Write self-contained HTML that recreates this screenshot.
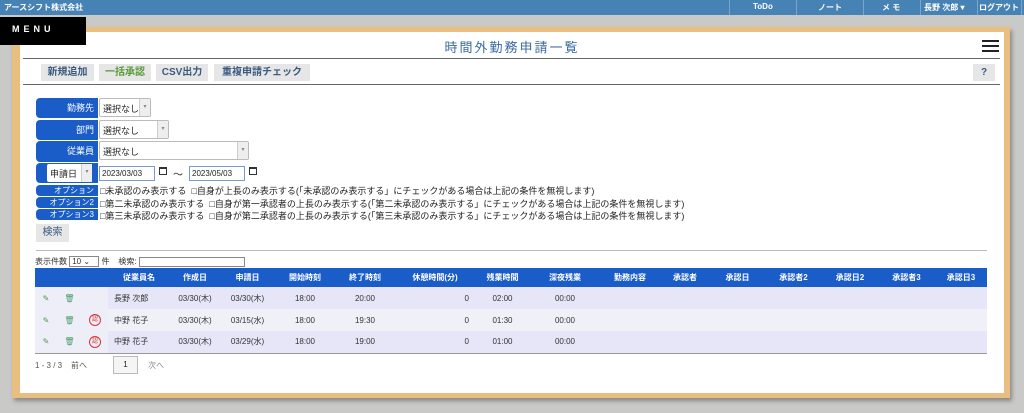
<!DOCTYPE html>
<html><head><meta charset="utf-8"><style>
*{box-sizing:border-box;margin:0;padding:0}
body{width:1024px;height:413px;overflow:hidden;background:#c9c9c7;font-family:"Liberation Sans","Noto Sans CJK JP",sans-serif;position:relative;font-size:9px;color:#222}
.abs{position:absolute}
.top{left:0;top:0;width:1024px;height:15px;background:#4682b4;color:#fff;font-size:8px;font-weight:bold}
.top span{position:absolute;top:2px}
.top .sep{position:absolute;top:0;width:1px;height:15px;background:#7aa6cc}
.card{left:12px;top:27px;width:998px;height:371px;background:#e8bf80;box-shadow:2px 3px 4px #888}
.inner{left:20px;top:32px;width:984px;height:361px;background:#fff}
.menu{left:0;top:17px;width:86px;height:28px;background:#000;color:#fff;font-weight:bold;font-size:9px;letter-spacing:4px;padding:7px 0 0 12px}
.title{left:0;width:1024px;top:37px;text-align:center;color:#3a6aa0;font-size:13px;letter-spacing:2px}
.hr{height:1px;background:#666}
.btn{top:64px;height:17px;background:#e6e6e6;font-weight:bold;font-size:10px;color:#3a5a80;text-align:center;line-height:17px}
.lab{left:36px;width:62px;background:#1a5cc8;color:#fff;text-align:right;padding-right:4px;border-radius:4px 0 0 4px;font-size:9px}
.sel{height:19px;border:1px solid #bbb;background:#fff;font-size:9px;padding:3px 0 0 3px;border-radius:2px}
.sel i{position:absolute;right:0;top:0;width:11px;height:17px;background:#eee;border-left:1px solid #ccc;font-style:normal;font-size:6px;color:#888;text-align:center;line-height:17px}
.inp{height:15px;border:1px solid #7a9cc8;background:#fff;font-size:8px;padding:2px 0 0 2px}
.cal{width:8px;height:8px;border:1px solid #333;border-top-width:2px}
.opt{font-size:9px;color:#222;white-space:nowrap}
table{position:absolute;left:35px;top:268px;width:952px;border-collapse:collapse;font-size:8px}
th{background:#1a5cc8;color:#fff;height:19px;font-weight:bold;font-size:8px}
td{height:22px;text-align:center;color:#333}
tr.a td{background:#e6e6f8}tr.b td{background:#f0f0f8}
tr.a td.ic,tr.b td.ic{background:#eeeef8}
tbody tr:last-child td{border-bottom:1px solid #999}
.stamp{display:inline-block;width:12px;height:12px;border:1px solid #d33;border-radius:50%;color:#d33;font-size:6px;line-height:10px}
</style></head><body>
<div class="abs top"><span style="left:4px">アースシフト株式会社</span>
<div class="sep" style="left:729px"></div><span style="left:753px">ToDo</span>
<div class="sep" style="left:796px"></div><span style="left:818px">ノート</span>
<div class="sep" style="left:863px"></div><span style="left:882px">メ モ</span>
<div class="sep" style="left:920px"></div><span style="left:924px">長野 次郎 ▾</span>
<div class="sep" style="left:977px"></div><span style="left:979px">ログアウト</span>
<div class="sep" style="left:1021px"></div></div>
<div class="abs card"></div>
<div class="abs inner"></div>
<div class="abs menu">MENU</div>
<div class="abs title">時間外勤務申請一覧</div>
<div class="abs" style="left:982px;top:40px;width:17px"><div style="height:2px;background:#222;margin-bottom:3px"></div><div style="height:2px;background:#222;margin-bottom:3px"></div><div style="height:2px;background:#222"></div></div>
<div class="abs hr" style="left:23px;top:58px;width:977px"></div>
<div class="abs btn" style="left:41px;width:53px">新規追加</div>
<div class="abs btn" style="left:99px;width:52px;color:#5a9a3a">一括承認</div>
<div class="abs btn" style="left:156px;width:52px">CSV出力</div>
<div class="abs btn" style="left:214px;width:96px">重複申請チェック</div>
<div class="abs btn" style="left:973px;width:22px">?</div>
<div class="abs hr" style="left:23px;top:84px;width:977px"></div>

<div class="abs lab" style="top:98px;height:20px;line-height:20px">勤務先</div>
<div class="abs sel" style="left:99px;top:98px;width:52px">選択なし<i>▾</i></div>
<div class="abs lab" style="top:120px;height:20px;line-height:20px">部門</div>
<div class="abs sel" style="left:99px;top:120px;width:70px">選択なし<i>▾</i></div>
<div class="abs lab" style="top:141px;height:21px;line-height:21px">従業員</div>
<div class="abs sel" style="left:99px;top:141px;width:150px">選択なし<i>▾</i></div>
<div class="abs lab" style="top:163px;height:20px"></div>
<div class="abs sel" style="left:47px;top:164px;width:45px;height:18px;border:none;padding-top:3px">申請日<i style="height:18px">▾</i></div>
<div class="abs inp" style="left:99px;top:166px;width:56px">2023/03/03</div>
<div class="abs cal" style="left:159px;top:167px"></div>
<div class="abs" style="left:173px;top:166px;font-size:10px">～</div>
<div class="abs inp" style="left:189px;top:166px;width:56px">2023/05/03</div>
<div class="abs cal" style="left:249px;top:167px"></div>
<div class="abs lab" style="top:185px;height:11px;line-height:11px;font-size:8px">オプション</div>
<div class="abs lab" style="top:197px;height:11px;line-height:11px;font-size:8px">オプション2</div>
<div class="abs lab" style="top:209px;height:11px;line-height:11px;font-size:8px">オプション3</div>
<div class="abs opt" style="left:100px;top:184px">□未承認のみ表示する &nbsp;□自身が上長のみ表示する(「未承認のみ表示する」にチェックがある場合は上記の条件を無視します)</div>
<div class="abs opt" style="left:100px;top:197px">□第二未承認のみ表示する &nbsp;□自身が第一承認者の上長のみ表示する(「第二未承認のみ表示する」にチェックがある場合は上記の条件を無視します)</div>
<div class="abs opt" style="left:100px;top:209px">□第三未承認のみ表示する &nbsp;□自身が第二承認者の上長のみ表示する(「第三未承認のみ表示する」にチェックがある場合は上記の条件を無視します)</div>
<div class="abs btn" style="left:36px;top:224px;width:33px;height:18px;font-weight:normal;font-size:10px">検索</div>
<div class="abs hr" style="left:36px;top:250px;width:951px;background:#bbb"></div>
<div class="abs" style="left:35px;top:256px;font-size:8px;color:#333">表示件数 <span style="display:inline-block;border:1px solid #888;width:30px;height:11px;line-height:9px;padding-left:2px">10 ⌄</span> 件 &nbsp;&nbsp; 検索: <span style="display:inline-block;border:1px solid #888;width:106px;height:10px;vertical-align:middle"></span></div>
<table>
<colgroup><col style="width:22px"><col style="width:25px"><col style="width:26px"><col style="width:62px"><col style="width:50px"><col style="width:55px"><col style="width:60px"><col style="width:60px"><col style="width:80px"><col style="width:55px"><col style="width:70px"><col style="width:60px"><col style="width:50px"><col style="width:55px"><col style="width:57px"><col style="width:56px"><col style="width:57px"><col style="width:52px"></colgroup>
<thead><tr><th></th><th></th><th></th><th>従業員名</th><th>作成日</th><th>申請日</th><th>開始時刻</th><th>終了時刻</th><th>休憩時間(分)</th><th>残業時間</th><th>深夜残業</th><th>勤務内容</th><th>承認者</th><th>承認日</th><th>承認者2</th><th>承認日2</th><th>承認者3</th><th>承認日3</th></tr></thead>
<tbody>
<tr class="a"><td class="ic" style="color:#4a9a4a">✎</td><td class="ic" style="color:#4a9a6a">🗑</td><td class="ic"></td><td style="text-align:left;padding-left:6px">長野 次郎</td><td>03/30(木)</td><td>03/30(木)</td><td>18:00</td><td>20:00</td><td style="text-align:right;padding-right:6px">0</td><td>02:00</td><td>00:00</td><td></td><td></td><td></td><td></td><td></td><td></td><td></td></tr>
<tr class="b"><td class="ic" style="color:#4a9a4a">✎</td><td class="ic" style="color:#4a9a6a">🗑</td><td class="ic"><span class="stamp">認</span></td><td style="text-align:left;padding-left:6px">中野 花子</td><td>03/30(木)</td><td>03/15(水)</td><td>18:00</td><td>19:30</td><td style="text-align:right;padding-right:6px">0</td><td>01:30</td><td>00:00</td><td></td><td></td><td></td><td></td><td></td><td></td><td></td></tr>
<tr class="a"><td class="ic" style="color:#4a9a4a">✎</td><td class="ic" style="color:#4a9a6a">🗑</td><td class="ic"><span class="stamp">認</span></td><td style="text-align:left;padding-left:6px">中野 花子</td><td>03/30(木)</td><td>03/29(水)</td><td>18:00</td><td>19:00</td><td style="text-align:right;padding-right:6px">0</td><td>01:00</td><td>00:00</td><td></td><td></td><td></td><td></td><td></td><td></td><td></td></tr>
</tbody></table>
<div class="abs" style="left:35px;top:360px;font-size:8px;color:#555">1 - 3 / 3 &nbsp;&nbsp; 前へ</div>
<div class="abs" style="left:113px;top:356px;width:25px;height:18px;border:1px solid #bbb;background:#f5f5f5;text-align:center;line-height:16px;font-size:8px">1</div>
<div class="abs" style="left:148px;top:360px;font-size:8px;color:#888">次へ</div>
</body></html>
